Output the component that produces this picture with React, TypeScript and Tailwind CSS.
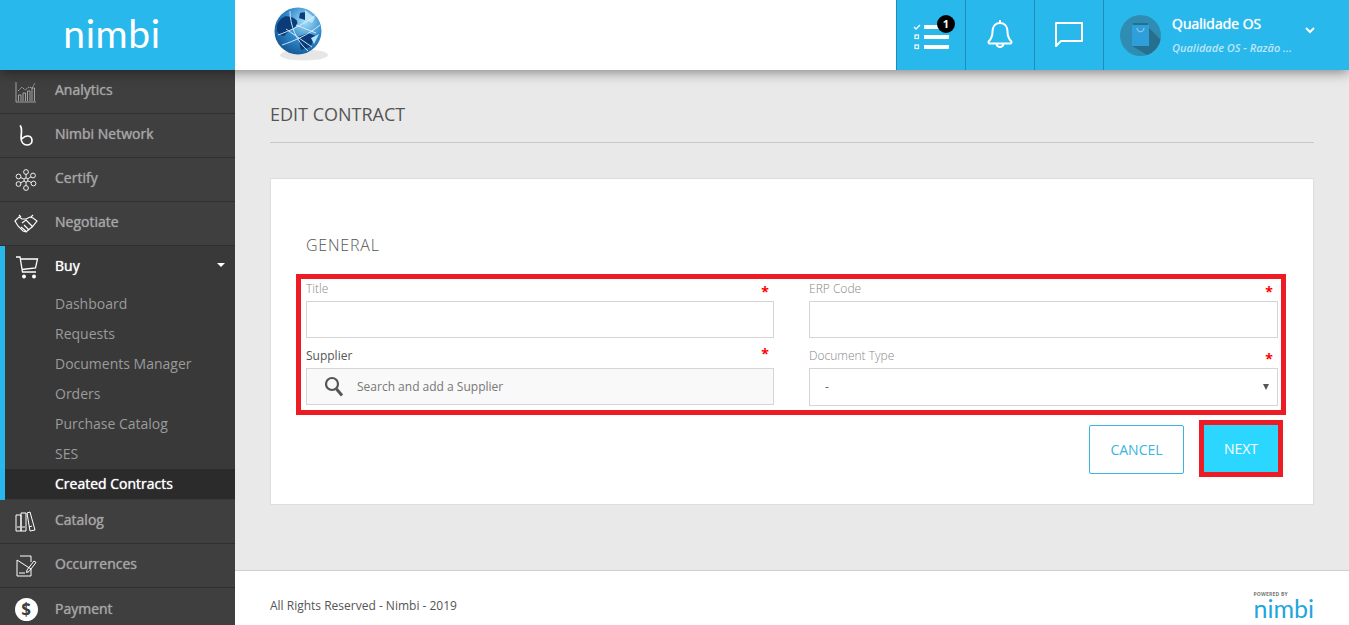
import React from "react";

const font = { fontFamily: '"Open Sans", sans-serif' };

function Analytics() {
  return (
    <svg width="22" height="22" viewBox="0 0 22 22" fill="none" stroke="#bdbdbd" strokeWidth="0.8">
      <path d="M1 1v20h20" />
      <path d="M3 10l4-4 3 3 4-3 3 1 3-5" strokeDasharray="1.6 .7" />
      <path d="M3.500 20v-6h2.500v6M8 20v-8h2.500v8M12.500 20v-10h2.500v10M17 20v-13h2.500v13" />
    </svg>
  );
}
function NetworkB() {
  return (
    <svg width="16" height="22" viewBox="0 0 16 22" fill="none" stroke="#fff" strokeWidth="1.700" strokeLinecap="round">
      <path d="M2.500 1c2 3 .6 7 .6 12 0 4 2.400 7 5.900 7 3 0 5-2 5-4.600 0-2.600-2-4.400-4.500-4.400-2.300 0-4 1.200-6.300 3.200" />
    </svg>
  );
}
function Certify() {
  const pts = [[11, 3], [18, 6.500], [18.500, 14.500], [11, 19], [3.500, 15], [3.500, 7.500]];
  return (
    <svg width="22" height="22" viewBox="0 0 22 22" fill="none" stroke="#fff" strokeWidth="0.900">
      {pts.map(([x, y], i) => (
        <g key={i}>
          <path d={`M11 11L${x} ${y}`} />
          <circle cx={x} cy={y} r="2.400" fill="#3f3f3f" />
        </g>
      ))}
      <circle cx="11" cy="11" r="2" fill="#3f3f3f" />
    </svg>
  );
}
function Handshake() {
  return (
    <svg width="24" height="20" viewBox="0 0 24 20" fill="none" stroke="#fff" strokeWidth="1.100">
      <path d="M1 7l4-4 3 2h4l4-2 3 1 4 3-5 6-6 5-3-1-5-5z" />
      <path d="M8 9l4-3 7 7M7 13l6 5M10 11l5 5" />
      <path d="M5 1l2 2M19 1l-2 2" />
    </svg>
  );
}
function Cart() {
  return (
    <svg width="24" height="24" viewBox="0 0 24 24" fill="none" stroke="#fff" strokeWidth="1.300">
      <path d="M1 1h4l2.500 15h13.500" />
      <path d="M5.500 3h17l-2 9-13.500 1.500" />
      <circle cx="9" cy="20.500" r="1.300" fill="#fff" />
      <circle cx="19" cy="20.500" r="1.300" fill="#fff" />
    </svg>
  );
}
function Books() {
  return (
    <svg width="22" height="21" viewBox="0 0 22 21" fill="none" stroke="#fff" strokeWidth="1">
      <path d="M1 4h5v16H1zM6 2h5v18H6zM12 2l3-1 5 18-5 1z" />
      <path d="M2 16h3M7 16h3M14 16l3-1" />
    </svg>
  );
}
function NoteEdit() {
  return (
    <svg width="22" height="22" viewBox="0 0 22 22" fill="none" stroke="#fff" strokeWidth="1">
      <path d="M5 1h11v6M16 14v7H2V5z" />
      <path d="M12 15l7-9 2 1.500-7 9-2.500 1z" />
      <path d="M4 18h6" />
    </svg>
  );
}
function Dollar() {
  return (
    <div className="flex h-[23px] w-[23px] items-center justify-center rounded-full bg-white text-[17px] font-bold leading-none text-[#3f3f3f]">$</div>
  );
}

function Globe() {
  return (
    <svg width="56" height="56" viewBox="0 0 56 56">
      <defs>
        <radialGradient id="g" cx="0.65" cy="0.3" r="0.85">
          <stop offset="0" stopColor="#a6def8" />
          <stop offset="0.5" stopColor="#2c86c9" />
          <stop offset="1" stopColor="#0f4a88" />
        </radialGradient>
      </defs>
      <ellipse cx="30" cy="50" rx="24" ry="5.500" fill="#e6e6e6" />
      <circle cx="24" cy="26" r="23.500" fill="url(#g)" />
      <path d="M3 20c4-8 8-10 14-8s8 5 5 9-7 4-10 8-6 1-9-3zM26 8c5-2 9 0 11 3l-6 4-6-2zM24 32l10-4 8 3-6 11-9 3z" fill="#0b3c7a" />
      <path d="M31 5l10 8-3 5-7-3zM37 33l8-4-5 10z" fill="#b5e3f9" />
      <g stroke="#dff1fa" strokeWidth="0.900" fill="none">
        <path d="M4 30c12-4 28-12 38-20" />
        <path d="M8 40c12-4 26-10 38-20" />
        <path d="M16 6c0 14 6 30 18 40" />
        <path d="M22 20l20 8M12 24l26 18" />
      </g>
    </svg>
  );
}

function Tasks() {
  return (
    <svg width="36" height="30" viewBox="0 0 36 30">
      <path d="M1 6l2 2 4-4" stroke="#fff" strokeWidth="1.300" fill="none" />
      <rect x="2" y="14" width="3.500" height="3.500" fill="none" stroke="#fff" strokeWidth="1.200" />
      <rect x="2" y="24" width="3.500" height="3.500" fill="none" stroke="#fff" strokeWidth="1.200" />
      <path d="M11 4h16v4H11zM11 14h26l-1.500 4H11zM11 24h26l-1.500 4H11z" fill="#fff" />
    </svg>
  );
}
function Bell() {
  return (
    <svg width="26" height="32" viewBox="0 0 26 32" fill="none" stroke="#fff" strokeWidth="2" strokeLinejoin="round">
      <path d="M13 1v3M13 4c-5 0-7.500 4-7.500 8.500 0 5-1 7-3.500 9.500-1 1-.5 2.500 1 2.500h20c1.500 0 2-1.500 1-2.500-2.500-2.500-3.500-4.500-3.500-9.500C20.500 8 18 4 13 4z" />
      <path d="M9.500 25c.5 2 1.800 3 3.500 3s3-1 3.500-3" />
    </svg>
  );
}
function Chat() {
  return (
    <svg width="30" height="28" viewBox="0 0 30 28" fill="none" stroke="#fff" strokeWidth="2" strokeLinejoin="round">
      <path d="M2 2h26v18H7l-5 5z" />
    </svg>
  );
}
function Avatar() {
  return (
    <svg width="41" height="41" viewBox="0 0 41 41">
      <defs>
        <clipPath id="av"><circle cx="20.500" cy="20.500" r="20.500" /></clipPath>
      </defs>
      <g clipPath="url(#av)">
        <rect width="41" height="41" fill="#2f8db3" />
        <path d="M29 13L41 25V41H29L12 31z" fill="#276f8e" />
        <rect x="13" y="8" width="15" height="2" fill="#276f8e" />
        <rect x="12" y="10" width="17" height="21" fill="#2f9fdc" />
        <path d="M17 13c0 5 7 5 7 0" stroke="#bfe6f7" strokeWidth="0.800" fill="none" />
      </g>
    </svg>
  );
}

function NavItem({ icon, label, tight }: { icon: React.ReactNode; label: string; tight?: boolean }) {
  return (
    <div className="flex h-11 shrink-0 items-center border-b border-[#2f2f2f] bg-[#3f3f3f]">
      <div className="flex w-[55px] shrink-0 justify-center pr-[3px]">{icon}</div>
      <span className={tight ? "pb-[2px] text-[14px] text-[#a5a5a5] [text-shadow:0_0_1px_#a5a5a5]" : "pb-[4px] text-[14px] text-[#a5a5a5] [text-shadow:0_0_1px_#a5a5a5]"}>{label}</span>
    </div>
  );
}

function SubItem({ label, active }: { label: string; active?: boolean }) {
  return (
    <div className={active ? "flex h-[30px] items-center bg-[#2b2b2b] pb-[2px] pl-[50px] text-[14px] text-white [text-shadow:0_0_1px_#ffffff]" : "flex h-[30px] items-center pb-[2px] pl-[50px] text-[14px] text-[#9b9b9b]"}>
      {label}
    </div>
  );
}

function Star({ className }: { className: string }) {
  return <span className={className}>*</span>;
}

function Sidebar() {
  return (
    <aside className="flex w-[235px] shrink-0 flex-col overflow-hidden bg-[#3f3f3f]">
      <NavItem icon={<Analytics />} label="Analytics" />
      <NavItem icon={<NetworkB />} label="Nimbi Network" />
      <NavItem icon={<Certify />} label="Certify" />
      <NavItem icon={<Handshake />} label="Negotiate" />
      <div className="h-[254px] shrink-0 border-l-[5px] border-[#29b8ec] bg-[#393939]">
        <div className="flex h-[43px] items-center pt-[1px]">
          <div className="flex w-[50px] shrink-0 justify-center pr-[7px]"><Cart /></div>
          <span className="flex-1 pb-[5px] text-[14px] text-white [text-shadow:0_0_1px_#ffffff]">Buy</span>
          <div className="mr-[10px] mb-[6px] h-0 w-0 border-x-[4px] border-t-[4px] border-x-transparent border-t-white" />
        </div>
        <div>
          <SubItem label="Dashboard" />
          <SubItem label="Requests" />
          <SubItem label="Documents Manager" />
          <SubItem label="Orders" />
          <SubItem label="Purchase Catalog" />
          <SubItem label="SES" />
          <SubItem label="Created Contracts" active />
        </div>
      </div>
      <NavItem icon={<Books />} label="Catalog" />
      <NavItem icon={<NoteEdit />} label="Occurrences" />
      <NavItem icon={<Dollar />} label="Payment" tight />
    </aside>
  );
}

function Field({ label, dark, children }: { label: string; dark?: boolean; children: React.ReactNode }) {
  return (
    <div>
      <div className="flex h-[22px] items-start justify-between">
        <span className={dark ? "text-[12px] leading-[20px] text-[#555555]" : "text-[12px] font-light leading-[20px] text-[#888888]"}>{label}</span>
        <Star className={dark ? "-mt-[1px] mr-[5px] text-[14px] font-bold leading-[18px] text-[#ff0000]" : "mt-[4px] mr-[5px] text-[14px] font-bold leading-[18px] text-[#ff0000]"} />
      </div>
      {children}
    </div>
  );
}

export default function App() {
  return (
    <div className="flex h-[625px] w-[1349px] flex-col overflow-hidden bg-[#e9e9e9]" style={font}>
      <header className="relative z-10 flex h-[70px] shrink-0 bg-white shadow-[0_2px_12px_rgba(0,0,0,0.45)]">
        <div className="flex w-[235px] items-center justify-center bg-[#29b8ec] pb-[3px] pr-[11px]">
          <span className="text-[39px] font-normal leading-none tracking-[0.6px] text-white" style={{ fontFamily: '"Lato", sans-serif' }}>nimbi</span>
        </div>
        <div className="flex-1 pl-[39px] pt-[5px]"><Globe /></div>
        <div className="flex bg-[#29b8ec]">
          <div className="relative flex w-[70px] items-center justify-center border-x border-[#1e8db5] pr-[1px] pt-[2px]">
            <Tasks />
            <div className="absolute left-[40px] top-[15px] flex h-[18px] w-[18px] items-center justify-center rounded-full bg-black text-[11px] font-bold text-white">1</div>
          </div>
          <div className="flex w-[69px] items-center justify-center border-r border-[#1e8db5]"><Bell /></div>
          <div className="flex w-[69px] items-center justify-center border-r border-[#1e8db5]"><Chat /></div>
          <div className="flex w-[245px] items-center pl-[16px]">
            <Avatar />
            <div className="ml-[11px] w-[131px] pt-[2px]">
              <div className="text-[14px] leading-[20px] text-white [text-shadow:0_0_1px_#ffffff]">Qualidade OS</div>
              <div className="mt-[4px] text-[11px] font-semibold italic leading-[20px] text-[#bfe6f7]">Qualidade OS - Razão ...</div>
            </div>
            <svg className="mb-[9px] ml-[2px]" width="10" height="7" viewBox="0 0 10 7" fill="none" stroke="#fff" strokeWidth="2"><path d="M1 1l4 4 4-4" /></svg>
          </div>
        </div>
      </header>
      <div className="flex min-h-0 flex-1">
        <Sidebar />
        <div className="flex min-w-0 flex-1 flex-col">
          <main className="h-[500px] shrink-0 px-[35px]">
            <h1 className="flex h-[73px] items-end border-b border-[#c8c8c8] pb-[15px] text-[18px] font-normal leading-[25px] text-[#555555]">EDIT CONTRACT</h1>
            <section className="mt-[35px] h-[327px] border border-[#dddddd] bg-white pl-[25px] pr-[27px]">
              <h2 className="pl-[10px] pt-[55px] text-[16px] font-light leading-[22px] tracking-[0.8px] text-[#555555]">GENERAL</h2>
              <div className="mt-[18px] h-[141px] border-[5px] border-[#ed1c24] pl-[5px] pr-[3px]">
                <div className="grid grid-cols-[468px_469px] gap-x-[35px] gap-y-[8px]">
                  <Field label="Title">
                    <div className="h-[37px] border border-[#d5d5d5] bg-white" />
                  </Field>
                  <Field label="ERP Code">
                    <div className="h-[37px] border border-[#d5d5d5] bg-white" />
                  </Field>
                  <Field label="Supplier" dark>
                    <div className="flex h-[37px] items-center border border-[#d5d5d5] bg-[#f9f9f9] pl-[17px]">
                      <svg width="20" height="22" viewBox="0 0 20 22" fill="none" stroke="#555" strokeWidth="2.200"><circle cx="8" cy="8" r="6" /><path d="M12.500 13l5.500 6.500" strokeWidth="3" /></svg>
                      <span className="ml-[13px] text-[12px] text-[#777777]">Search and add a Supplier</span>
                    </div>
                  </Field>
                  <Field label="Document Type">
                    <div className="flex h-[38px] items-center justify-between border border-[#d5d5d5] bg-white pl-[15px] pr-[8px]">
                      <span className="text-[12px] text-[#666666]">-</span>
                      <div className="h-0 w-0 border-x-[3px] border-t-[6px] border-x-transparent border-t-[#555555]" />
                    </div>
                  </Field>
                </div>
              </div>
              <div className="mt-[5px] flex items-start justify-end pr-[3px]">
                <button className="mt-[5px] h-[49px] w-[95px] rounded-[2px] border border-[#3ab5e0] bg-white text-[14px] text-[#3ab5e0]">CANCEL</button>
                <div className="ml-[15px] h-[57px] w-[84px] border-[5px] border-[#ed1c24]">
                  <button className="h-[47px] w-[74px] bg-[#2cd7ff] text-[14px] text-white">NEXT</button>
                </div>
              </div>
            </section>
          </main>
          <footer className="flex h-[55px] shrink-0 items-start justify-between border-t border-[#d0d0d0] bg-white px-[35px]">
            <span className="pt-[27px] text-[12px] leading-[16px] text-[#555555]">All Rights Reserved - Nimbi - 2019</span>
            <div className="flex flex-col pt-[20px]">
              <span className="text-[5px] font-bold leading-[6px] tracking-[0.2px] text-[#777777]">POWERED BY</span>
              <span className="mt-[1px] text-[25px] font-normal leading-[21px] text-[#1ea7dc]" style={{ fontFamily: '"Lato", sans-serif' }}>nimbi</span>
            </div>
          </footer>
        </div>
      </div>
    </div>
  );
}
